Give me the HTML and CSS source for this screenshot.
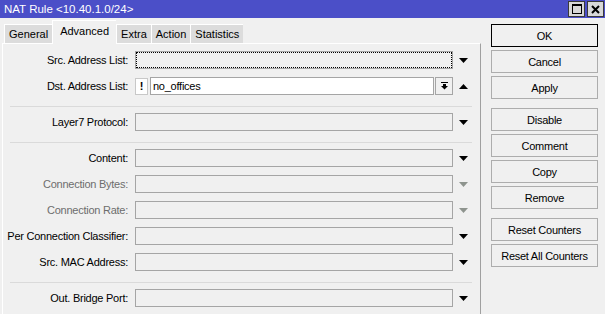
FILE: index.html
```html
<!DOCTYPE html>
<html>
<head>
<meta charset="utf-8">
<link rel="stylesheet" href="styles.css">
</head>
<body>
<div class="window">
  <div class="titlebar">
    <span class="title">NAT Rule &lt;10.40.1.0/24&gt;</span>
    <div class="tbtns">
      <span class="tbtn"><svg width="10" height="10" viewBox="0 0 10 10"><rect x="0.5" y="0.5" width="9" height="9" fill="none" stroke="#000"/><rect x="0" y="0" width="10" height="2" fill="#000"/></svg></span>
      <span class="tbtn"><svg width="9" height="9" viewBox="0 0 9 9"><path d="M1 1 L8 8 M8 1 L1 8" stroke="#000" stroke-width="2"/></svg></span>
    </div>
  </div>
  <div class="main">
    <div class="left">
      <div class="tabs">
        <span class="tab">General</span>
        <span class="tab sel">Advanced</span>
        <span class="tab">Extra</span>
        <span class="tab">Action</span>
        <span class="tab">Statistics</span>
      </div>
      <div class="panel">
        <div class="row">
          <span class="lbl">Src. Address List:</span>
          <span class="field focus"></span>
          <svg class="arr" width="9" height="5" viewBox="0 0 9 5"><polygon points="0,0 9,0 4.5,5"/></svg>
        </div>
        <div class="row">
          <span class="lbl">Dst. Address List:</span>
          <span class="combo">
            <span class="neg">!</span>
            <span class="field white">no_offices</span>
            <span class="dbtn"><svg width="7" height="8" viewBox="0 0 7 8"><rect x="0" y="0" width="7" height="1"/><rect x="2" y="2" width="3" height="2"/><polygon points="0,4 7,4 3.5,7.5"/></svg></span>
          </span>
          <svg class="arr" width="9" height="5" viewBox="0 0 9 5"><polygon points="0,5 9,5 4.5,0"/></svg>
        </div>
        <div class="sep"></div>
        <div class="row">
          <span class="lbl">Layer7 Protocol:</span>
          <span class="field"></span>
          <svg class="arr" width="9" height="5" viewBox="0 0 9 5"><polygon points="0,0 9,0 4.5,5"/></svg>
        </div>
        <div class="sep"></div>
        <div class="row">
          <span class="lbl">Content:</span>
          <span class="field"></span>
          <svg class="arr" width="9" height="5" viewBox="0 0 9 5"><polygon points="0,0 9,0 4.5,5"/></svg>
        </div>
        <div class="row dis">
          <span class="lbl">Connection Bytes:</span>
          <span class="field"></span>
          <svg class="arr" width="9" height="5" viewBox="0 0 9 5"><polygon points="0,0 9,0 4.5,5"/></svg>
        </div>
        <div class="row dis">
          <span class="lbl">Connection Rate:</span>
          <span class="field"></span>
          <svg class="arr" width="9" height="5" viewBox="0 0 9 5"><polygon points="0,0 9,0 4.5,5"/></svg>
        </div>
        <div class="row">
          <span class="lbl">Per Connection Classifier:</span>
          <span class="field"></span>
          <svg class="arr" width="9" height="5" viewBox="0 0 9 5"><polygon points="0,0 9,0 4.5,5"/></svg>
        </div>
        <div class="row">
          <span class="lbl">Src. MAC Address:</span>
          <span class="field"></span>
          <svg class="arr" width="9" height="5" viewBox="0 0 9 5"><polygon points="0,0 9,0 4.5,5"/></svg>
        </div>
        <div class="sep"></div>
        <div class="row">
          <span class="lbl">Out. Bridge Port:</span>
          <span class="field"></span>
          <svg class="arr" width="9" height="5" viewBox="0 0 9 5"><polygon points="0,0 9,0 4.5,5"/></svg>
        </div>
      </div>
    </div>
    <div class="right">
      <div class="group">
        <span class="btn default">OK</span>
        <span class="btn">Cancel</span>
        <span class="btn">Apply</span>
      </div>
      <div class="group">
        <span class="btn">Disable</span>
        <span class="btn">Comment</span>
        <span class="btn">Copy</span>
        <span class="btn">Remove</span>
      </div>
      <div class="group">
        <span class="btn">Reset Counters</span>
        <span class="btn">Reset All Counters</span>
      </div>
    </div>
  </div>
</div>
</body>
</html>
```
FILE: styles.css
```css
html, body {
  margin: 0;
  padding: 0;
  background: #f0f0f0;
}
body {
  font-family: "Liberation Sans", Arial, sans-serif;
  font-size: 11px;
  letter-spacing: -0.25px;
  color: #000;
}
.window {
  height: 100vh;
  display: flex;
  flex-direction: column;
  overflow: hidden;
}
.titlebar {
  height: 18px;
  flex: none;
  background: #4b4fc8;
  display: flex;
  align-items: center;
  justify-content: space-between;
  padding: 0 1px 0 4px;
}
.title {
  color: #fff;
  font-size: 11.5px;
  letter-spacing: 0;
}
.tbtns {
  display: flex;
  gap: 2px;
}
.tbtn {
  width: 15px;
  height: 14px;
  background: #d8d8d8;
  border: 1px solid #3a3a3a;
  display: flex;
  align-items: center;
  justify-content: center;
}
.tbtn svg { fill: #000; }
.main {
  flex: 1;
  display: flex;
}
.left {
  margin-left: 2px;
  width: 479px;
  display: flex;
  flex-direction: column;
}
.tabs {
  margin-top: 2px;
  height: 23px;
  padding-left: 2px;
  display: flex;
  align-items: flex-end;
  position: relative;
  z-index: 1;
}
.tab {
  height: 19px;
  box-sizing: border-box;
  background: #dcdcdc;
  border-left: 1px solid #fff;
  border-top: 1px solid #fff;
  padding: 1px 4px 0 4px;
  line-height: 16px;
  letter-spacing: 0;
}
.tab.sel {
  height: 24px;
  margin-bottom: -1px;
  background: #f0f0f0;
  padding: 2px 7px 0 7px;
  line-height: 17px;
  align-self: flex-start;
}
.panel {
  flex: 1;
  border-top: 1px solid #fff;
  border-left: 1px solid #fff;
  border-right: 1px solid #a0a0a0;
  padding-top: 7px;
}
.row {
  height: 18px;
  margin-bottom: 8px;
  display: flex;
  align-items: center;
}
.lbl {
  width: 125px;
  text-align: right;
  margin-right: 7px;
  white-space: nowrap;
  flex: none;
}
.field {
  width: 318px;
  height: 18px;
  box-sizing: border-box;
  border: 1px solid #a5a5a5;
  background: #f0f0f0;
  flex: none;
  display: flex;
  align-items: center;
  padding-left: 3px;
}
.field.focus {
  outline: 1px dotted #000;
  outline-offset: -2px;
}
.combo {
  width: 318px;
  flex: none;
  display: flex;
  align-items: center;
}
.neg {
  width: 13px;
  height: 17px;
  box-sizing: border-box;
  border: 1px solid #c8c8c8;
  background: #fff;
  font-weight: bold;
  display: flex;
  align-items: center;
  justify-content: center;
  margin-right: 2px;
  flex: none;
}
.field.white {
  flex: 1;
  width: auto;
  background: #fff;
  padding-left: 2px;
}
.dbtn {
  width: 18px;
  height: 18px;
  box-sizing: border-box;
  border: 1px solid #a5a5a5;
  background: #f0f0f0;
  margin-left: 1px;
  display: flex;
  align-items: center;
  justify-content: center;
  flex: none;
}
.dbtn svg { fill: #000; }
.arr {
  margin-left: 6px;
  fill: #000;
  flex: none;
}
.dis .lbl { color: #6d6d6d; }
.dis .arr { fill: #8e948e; }
.sep {
  height: 1px;
  background: #dadada;
  margin: 11px 8px 6px 7px;
}
.right {
  margin-left: 10px;
  margin-top: 6px;
  width: 107px;
  display: flex;
  flex-direction: column;
  gap: 9px;
}
.group {
  display: flex;
  flex-direction: column;
  gap: 3px;
}
.btn {
  height: 23px;
  box-sizing: border-box;
  border: 1px solid #adadad;
  background: #f0f0f0;
  display: flex;
  align-items: center;
  justify-content: center;
  white-space: nowrap;
}
.btn.default {
  border-color: #000;
}
```
